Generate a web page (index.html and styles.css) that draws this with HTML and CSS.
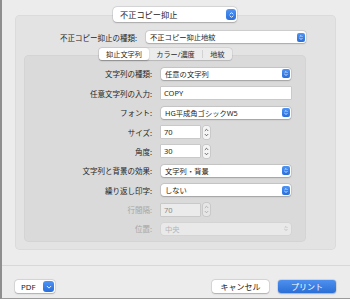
FILE: index.html
```html
<!DOCTYPE html>
<html lang="ja">
<head>
    <meta charset="UTF-8">
    <meta name="viewport" content="width=device-width, initial-scale=1.0">
    <title>プリント</title>
    <link rel="stylesheet" href="styles.css">
</head>
<body>
    <div class="window">
        <div class="select head-select">
            <span class="select-text">不正コピー抑止</span>
            <span class="arrows">
                <svg viewBox="0 0 6 10" width="5" height="8"><path d="M1.2 3.8 L3 2 L4.8 3.8 M1.2 6.2 L3 8 L4.8 6.2" fill="none" stroke="#fff" stroke-width="1.1" stroke-linecap="round" stroke-linejoin="round"/></svg>
            </span>
        </div>

        <div class="outer-panel">
            <div class="type-row">
                <span class="type-label">不正コピー抑止の種類:</span>
                <div class="select type-select">
                    <span class="select-text">不正コピー抑止地紋</span>
                    <span class="arrows"><svg viewBox="0 0 6 10" width="4" height="7"><path d="M1.2 3.8 L3 2 L4.8 3.8 M1.2 6.2 L3 8 L4.8 6.2" fill="none" stroke="#fff" stroke-width="1.1" stroke-linecap="round" stroke-linejoin="round"/></svg></span>
                </div>
            </div>

            <div class="tabs">
                <span class="tab active">抑止文字列</span>
                <span class="tab">カラー/濃度</span>
                <span class="tab tab-last">地紋</span>
            </div>

            <div class="inner-panel">
                <div class="form-row">
                    <label>文字列の種類:</label>
                    <div class="select">
                        <span class="select-text">任意の文字列</span>
                        <span class="arrows"><svg viewBox="0 0 6 10" width="4" height="7"><path d="M1.2 3.8 L3 2 L4.8 3.8 M1.2 6.2 L3 8 L4.8 6.2" fill="none" stroke="#fff" stroke-width="1.1" stroke-linecap="round" stroke-linejoin="round"/></svg></span>
                    </div>
                </div>
                <div class="form-row">
                    <label>任意文字列の入力:</label>
                    <div class="field wide-field">COPY</div>
                </div>
                <div class="form-row">
                    <label>フォント:</label>
                    <div class="select">
                        <span class="select-text">HG平成角ゴシックW5</span>
                        <span class="arrows"><svg viewBox="0 0 6 10" width="4" height="7"><path d="M1.2 3.8 L3 2 L4.8 3.8 M1.2 6.2 L3 8 L4.8 6.2" fill="none" stroke="#fff" stroke-width="1.1" stroke-linecap="round" stroke-linejoin="round"/></svg></span>
                    </div>
                </div>
                <div class="form-row">
                    <label>サイズ:</label>
                    <div class="field num-field">70</div>
                    <span class="stepper"><svg viewBox="0 0 7 14" width="7" height="13"><path d="M2 5 L3.5 3.5 L5 5 M2 9 L3.5 10.5 L5 9" fill="none" stroke="#4a4a4a" stroke-width="0.9" stroke-linecap="round" stroke-linejoin="round"/></svg></span>
                </div>
                <div class="form-row">
                    <label>角度:</label>
                    <div class="field num-field">30</div>
                    <span class="stepper"><svg viewBox="0 0 7 14" width="7" height="13"><path d="M2 5 L3.5 3.5 L5 5 M2 9 L3.5 10.5 L5 9" fill="none" stroke="#4a4a4a" stroke-width="0.9" stroke-linecap="round" stroke-linejoin="round"/></svg></span>
                </div>
                <div class="form-row">
                    <label>文字列と背景の効果:</label>
                    <div class="select">
                        <span class="select-text">文字列・背景</span>
                        <span class="arrows"><svg viewBox="0 0 6 10" width="4" height="7"><path d="M1.2 3.8 L3 2 L4.8 3.8 M1.2 6.2 L3 8 L4.8 6.2" fill="none" stroke="#fff" stroke-width="1.1" stroke-linecap="round" stroke-linejoin="round"/></svg></span>
                    </div>
                </div>
                <div class="form-row">
                    <label>繰り返し印字:</label>
                    <div class="select">
                        <span class="select-text">しない</span>
                        <span class="arrows"><svg viewBox="0 0 6 10" width="4" height="7"><path d="M1.2 3.8 L3 2 L4.8 3.8 M1.2 6.2 L3 8 L4.8 6.2" fill="none" stroke="#fff" stroke-width="1.1" stroke-linecap="round" stroke-linejoin="round"/></svg></span>
                    </div>
                </div>
                <div class="form-row disabled">
                    <label>行間隔:</label>
                    <div class="field num-field">70</div>
                    <span class="stepper"><svg viewBox="0 0 7 14" width="7" height="13"><path d="M2 5 L3.5 3.5 L5 5 M2 9 L3.5 10.5 L5 9" fill="none" stroke="#a5a5a5" stroke-width="0.9" stroke-linecap="round" stroke-linejoin="round"/></svg></span>
                </div>
                <div class="form-row disabled">
                    <label>位置:</label>
                    <div class="select">
                        <span class="select-text">中央</span>
                        <span class="arrows"><svg viewBox="0 0 6 10" width="4" height="7"><path d="M1.2 3.8 L3 2 L4.8 3.8 M1.2 6.2 L3 8 L4.8 6.2" fill="none" stroke="#b0b0b0" stroke-width="1" stroke-linecap="round" stroke-linejoin="round"/></svg></span>
                    </div>
                </div>
            </div>
        </div>

        <div class="footer">
            <div class="pdf-button">
                <span class="pdf-text">PDF</span>
                <span class="pdf-arrow"><svg viewBox="0 0 8 8" width="6" height="6"><path d="M1.5 3 L4 5.5 L6.5 3" fill="none" stroke="#fff" stroke-width="1.2" stroke-linecap="round" stroke-linejoin="round"/></svg></span>
            </div>
            <div class="spacer"></div>
            <button class="btn">キャンセル</button>
            <button class="btn primary">プリント</button>
        </div>
    </div>
</body>
</html>
```

FILE: styles.css
```css
* {
    margin: 0;
    padding: 0;
    box-sizing: border-box;
    font-family: 'Noto Sans', 'Noto Sans CJK JP', sans-serif;
}

body {
    background: #ececec;
}

.window {
    width: 350px;
    height: 299px;
    background: #ececec;
    border-left: 2px solid #8e8e8e;
    border-bottom: 1px solid #9a9a9a;
    padding-top: 7px;
    color: #262626;
    overflow: hidden;
}

/* popup buttons */
.select {
    display: flex;
    align-items: center;
    height: 12px;
    width: 130px;
    background: #fff;
    border-radius: 3px;
    box-shadow: 0 0 0 0.5px rgba(0, 0, 0, 0.12), 0 0.5px 1.5px rgba(0, 0, 0, 0.22);
    padding: 0 1.5px 0 4px;
}

.select-text {
    flex: 1;
    font-size: 7.3px;
    line-height: 12px;
    white-space: nowrap;
    color: #222;
}

.arrows {
    display: flex;
    align-items: center;
    justify-content: center;
    width: 8px;
    height: 9px;
    border-radius: 2px;
    background: linear-gradient(#4f94f5, #2a6edb);
}

.head-select {
    position: relative;
    z-index: 1;
    width: 124px;
    height: 15px;
    margin: 0 0 -7px 111px;
    padding: 0 1px 0 7px;
    border-radius: 4px;
}

.head-select .select-text {
    font-size: 8.2px;
}

.head-select .arrows {
    width: 10px;
    height: 11px;
    border-radius: 3px;
}

/* panels */
.outer-panel {
    width: 321px;
    height: 235px;
    margin-left: 13px;
    padding-top: 16px;
    background: #e3e3e3;
    border-radius: 5px;
    box-shadow: inset 0 0 0 0.5px rgba(0, 0, 0, 0.07);
}

.type-row {
    display: flex;
    align-items: center;
    height: 12px;
    gap: 9px;
}

.type-label {
    width: 122px;
    text-align: right;
    font-size: 7.5px;
    white-space: nowrap;
}

.type-select {
    width: 160px;
}

.tabs {
    position: relative;
    z-index: 1;
    display: flex;
    width: 133px;
    height: 12px;
    margin: 5px 0 -5px 84px;
    background: #ececec;
    border-radius: 3px;
    box-shadow: 0 0 0 0.5px rgba(0, 0, 0, 0.1), 0 0.5px 1px rgba(0, 0, 0, 0.12);
}

.tab {
    display: flex;
    align-items: center;
    justify-content: center;
    width: 54px;
    font-size: 7.2px;
    color: #2a2a2a;
    white-space: nowrap;
    border-right: 1px solid #d2d2d2;
    margin: 2px 0;
}

.tab.active {
    width: 50px;
    margin: 0;
    background: #fff;
    border-radius: 3px;
    border-right: none;
    box-shadow: 0 0.5px 1.5px rgba(0, 0, 0, 0.25);
}

.tab-last {
    width: 29px;
    border-right: none;
}

.inner-panel {
    width: 282px;
    height: 187px;
    margin-left: 9px;
    padding-top: 9.3px;
    background: #dadada;
    border-radius: 5px;
    box-shadow: inset 0 0 0 0.5px rgba(0, 0, 0, 0.06);
}

.form-row {
    display: flex;
    align-items: center;
    height: 19.375px;
}

.form-row label {
    width: 128px;
    margin-right: 9px;
    text-align: right;
    font-size: 7.5px;
    white-space: nowrap;
}

.field {
    height: 12px;
    background: #fff;
    font-size: 7.5px;
    line-height: 12px;
    padding-left: 3px;
    color: #1e1e1e;
    box-shadow: 0 0 0 0.5px rgba(0, 0, 0, 0.15);
}

.wide-field {
    width: 130px;
}

.num-field {
    width: 39px;
    margin-right: 3px;
}

.stepper {
    display: flex;
    width: 7px;
    height: 13px;
    background: #f4f4f4;
    border-radius: 2px;
    box-shadow: 0 0 0 0.5px rgba(0, 0, 0, 0.15);
}

.disabled label {
    color: #a6a6a6;
}

.disabled .field {
    background: #ebebeb;
    color: #8a8a8a;
}

.disabled .stepper {
    background: #e6e6e6;
}

.disabled .select {
    background: #e9e9e9;
    box-shadow: 0 0 0 0.5px rgba(0, 0, 0, 0.06);
}

.disabled .select-text {
    color: #b5b5b5;
}

.disabled .arrows {
    background: none;
}

/* bottom bar */
.footer {
    display: flex;
    align-items: flex-start;
    margin-top: 15px;
    padding: 14px 14px 0 13px;
    border-top: 1px solid #d8d8d8;
}

.pdf-button {
    display: flex;
    align-items: center;
    width: 40px;
    height: 13px;
    background: #fff;
    border-radius: 3px;
    box-shadow: 0 0 0 0.5px rgba(0, 0, 0, 0.12), 0 0.5px 1.5px rgba(0, 0, 0, 0.22);
    padding: 0 1px 0 6px;
}

.pdf-text {
    flex: 1;
    font-size: 7.8px;
    color: #222;
}

.pdf-arrow {
    display: flex;
    align-items: center;
    justify-content: center;
    width: 11px;
    height: 11px;
    border-radius: 3px;
    background: linear-gradient(#4f94f5, #2a6edb);
}

.spacer {
    flex: 1;
}

.btn {
    width: 57px;
    height: 13px;
    border: none;
    border-radius: 3px;
    background: #fff;
    color: #222;
    font-size: 8px;
    line-height: 13px;
    box-shadow: 0 0 0 0.5px rgba(0, 0, 0, 0.12), 0 0.5px 1.5px rgba(0, 0, 0, 0.22);
}

.btn.primary {
    width: 58px;
    margin-left: 9px;
    background: linear-gradient(#4d90ef, #2b6fd6);
    color: #fff;
}
```
